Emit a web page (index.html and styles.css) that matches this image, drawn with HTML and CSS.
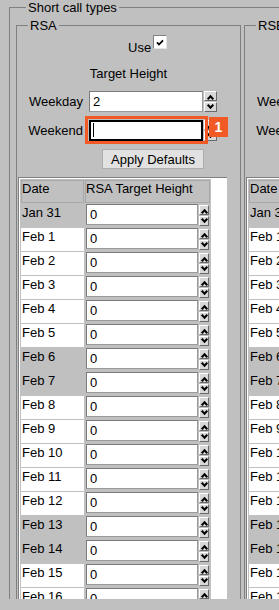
FILE: index.html
```html
<!DOCTYPE html>
<html lang="en">
<head>
    <meta charset="UTF-8">
    <title>Short call types</title>
    <link rel="stylesheet" href="styles.css">
</head>
<body>
    <div class="screen">
        <fieldset class="types">
            <legend>Short call types</legend>
            <div class="groups">

                <!-- RSA -->
                <fieldset class="group">
                    <legend>RSA</legend>
                    <div class="use-row">
                        <span class="use-label">Use</span>
                        <span class="check"><svg width="8" height="7" viewBox="0 0 8 7"><path d="M1 3.4 3 5.5 7 1.3" fill="none" stroke="#000" stroke-width="1.8"/></svg></span>
                    </div>
                    <div class="title">Target Height</div>
                    <div class="form-row">
                        <label class="form-label">Weekday</label>
                        <input class="field" type="text" value="2">
                        <span class="spin"><span class="spin-btn up"></span><span class="spin-btn down"></span></span>
                    </div>
                    <div class="form-row is-active">
                        <label class="form-label">Weekend</label>
                        <input class="field is-focused" type="text" value="">
                        <span class="spin"><span class="spin-btn up"></span><span class="spin-btn down"></span></span>
                        <span class="caret"></span>
                        <span class="highlight"></span>
                        <span class="badge">1</span>
                    </div>
                    <div class="form-row">
                        <span class="form-label"></span>
                        <div class="apply-cell"><button class="apply" type="button">Apply Defaults</button></div>
                    </div>
                    <div class="grid-box">
                        <table class="grid">
                            <colgroup><col class="c-date"><col class="c-value"></colgroup>
                            <thead><tr><th>Date</th><th>RSA Target Height</th></tr></thead>
                            <tbody></tbody>
                        </table>
                    </div>
                </fieldset>

                <!-- RSB -->
                <fieldset class="group">
                    <legend>RSB</legend>
                    <div class="use-row">
                        <span class="use-label">Use</span>
                        <span class="check"><svg width="8" height="7" viewBox="0 0 8 7"><path d="M1 3.4 3 5.5 7 1.3" fill="none" stroke="#000" stroke-width="1.8"/></svg></span>
                    </div>
                    <div class="title">Target Height</div>
                    <div class="form-row">
                        <label class="form-label">Weekday</label>
                        <input class="field" type="text" value="2">
                        <span class="spin"><span class="spin-btn up"></span><span class="spin-btn down"></span></span>
                    </div>
                    <div class="form-row">
                        <label class="form-label">Weekend</label>
                        <input class="field" type="text" value="1">
                        <span class="spin"><span class="spin-btn up"></span><span class="spin-btn down"></span></span>
                    </div>
                    <div class="form-row">
                        <span class="form-label"></span>
                        <div class="apply-cell"><button class="apply" type="button">Apply Defaults</button></div>
                    </div>
                    <div class="grid-box">
                        <table class="grid">
                            <colgroup><col class="c-date"><col class="c-value"></colgroup>
                            <thead><tr><th>Date</th><th>RSB Target Height</th></tr></thead>
                            <tbody></tbody>
                        </table>
                    </div>
                </fieldset>

            </div>
        </fieldset>
    </div>

    <script>
        // fill the date rows, weekends stay grey
        var months = ['Jan', 'Feb', 'Mar'];
        document.querySelectorAll('.grid tbody').forEach(function (body) {
            var day = new Date(2021, 0, 31);
            for (var i = 0; i < 18; i++) {
                var weekend = day.getDay() === 0 || day.getDay() === 6;
                var tr = document.createElement('tr');
                tr.innerHTML =
                    '<td class="date' + (weekend ? ' weekend' : '') + '">' + months[day.getMonth()] + ' ' + day.getDate() + '</td>' +
                    '<td><div class="cell"><input class="field small" type="text" value="0">' +
                    '<span class="spin"><span class="spin-btn up"></span><span class="spin-btn down"></span></span></div></td>';
                body.appendChild(tr);
                day.setDate(day.getDate() + 1);
            }
        });
    </script>
</body>
</html>
```

FILE: styles.css
```css
html, body {
    margin: 0;
    background: #c0c0c0;
    overflow: hidden;
}
body {
    font-family: "Liberation Sans", Arial, sans-serif;
    font-size: 13px;
    line-height: 15px;
    color: #000;
}
.screen {
    height: 599px;
    overflow: hidden;
}

/* fieldsets */
.types {
    margin: 0 0 0 9px;
    padding: 3px 0 0 6px;
    border: 1px solid #808080;
}
.types > legend,
.group > legend {
    margin-left: 10px;
    padding: 0 2px;
    line-height: 15px;
}
.groups {
    display: flex;
    align-items: flex-start;
}
.group {
    flex: none;
    box-sizing: border-box;
    width: 225px;
    margin: 0;
    padding: 0 1px;
    border: 1px solid #808080;
    min-width: 0;
}
.group + .group {
    margin-left: 3px;
}

/* top form */
.use-row {
    display: flex;
    align-items: flex-start;
    margin-top: 2px;
    padding-left: 110px;
}
.use-label {
    margin-top: 5px;
}
.check {
    display: flex;
    align-items: center;
    justify-content: center;
    box-sizing: border-box;
    width: 14px;
    height: 14px;
    margin-left: 2px;
    background: #fff;
    border: 1px solid;
    border-color: #808080 #e4e4e4 #e4e4e4 #808080;
}
.title {
    margin-top: 11px;
    text-align: center;
}
.form-row {
    display: flex;
    align-items: center;
    margin-top: 8px;
}
.title + .form-row {
    margin-top: 10px;
}
.form-label {
    flex: none;
    width: 65px;
    margin-right: 6px;
    text-align: right;
}
.field {
    box-sizing: border-box;
    width: 114px;
    height: 21px;
    margin: 0;
    padding: 0 3px;
    border: 1px solid #7a7a7a;
    border-right-color: #9a9a9a;
    border-bottom-color: #9a9a9a;
    background: #fff;
    font: inherit;
    color: #000;
    outline: none;
}
.field.small {
    width: 112px;
}
.field.is-focused {
    border: 2px solid #000;
}
.spin {
    display: flex;
    flex-direction: column;
    gap: 1px;
    margin-left: 1px;
}
.spin-btn {
    display: flex;
    align-items: center;
    justify-content: center;
    box-sizing: border-box;
    width: 13px;
    height: 10px;
    background: #d8d8d8;
    border: 1px solid;
    border-color: #fff #6a6a6a #6a6a6a #fff;
}
.spin-btn::before {
    content: "";
    width: 3px;
    height: 3px;
    border-left: 2px solid #000;
    border-top: 2px solid #000;
    transform: rotate(45deg);
    margin-top: 4px;
}
.spin-btn.down::before {
    transform: rotate(225deg);
    margin-top: -3px;
}
.apply-cell {
    display: flex;
    justify-content: center;
    width: 128px;
}
.apply {
    height: 20px;
    margin: 0;
    padding: 0 8px;
    border: 1px solid #adadad;
    background: #e1e1e1;
    font: inherit;
    color: #000;
}

/* focus annotation */
.is-active {
    position: relative;
}
.caret {
    position: absolute;
    left: 75px;
    top: 3px;
    width: 1px;
    height: 14px;
    background: #000;
}
.highlight {
    position: absolute;
    left: 67px;
    top: -4px;
    box-sizing: border-box;
    width: 123px;
    height: 28px;
    border: 3px solid #f15a24;
}
.badge {
    position: absolute;
    left: 191px;
    top: -3px;
    width: 19px;
    height: 20px;
    background: #f15a24;
    color: #fff;
    font-size: 14px;
    font-weight: bold;
    line-height: 20px;
    text-align: center;
}

/* date grid */
.grid-box {
    box-sizing: border-box;
    width: 209px;
    margin-top: 8px;
    padding: 1px 0 0 1px;
    border-left: 1px solid #808080;
    border-top: 1px solid #808080;
    background: #fff;
}
.grid {
    table-layout: fixed;
    width: 191px;
    border-collapse: separate;
    border-spacing: 1px;
    background: #c0c0c0;
}
.c-date {
    width: 63px;
}
.c-value {
    width: 125px;
}
.grid tr {
    height: 23px;
}
.grid th,
.grid td {
    padding: 0;
    vertical-align: top;
    text-align: left;
    font-weight: normal;
}
.grid th {
    padding: 1px 0 0 1px;
    box-shadow: inset 0 0 0 1px #a8a8a8;
    white-space: nowrap;
}
.grid td.date {
    padding: 1px 0 0 1px;
    background: #fff;
}
.grid td.weekend {
    background: transparent;
}
.cell {
    display: flex;
    padding-left: 1px;
}
.grid .spin {
    margin-top: 1px;
}
.grid .spin-btn {
    width: 10px;
}
```
